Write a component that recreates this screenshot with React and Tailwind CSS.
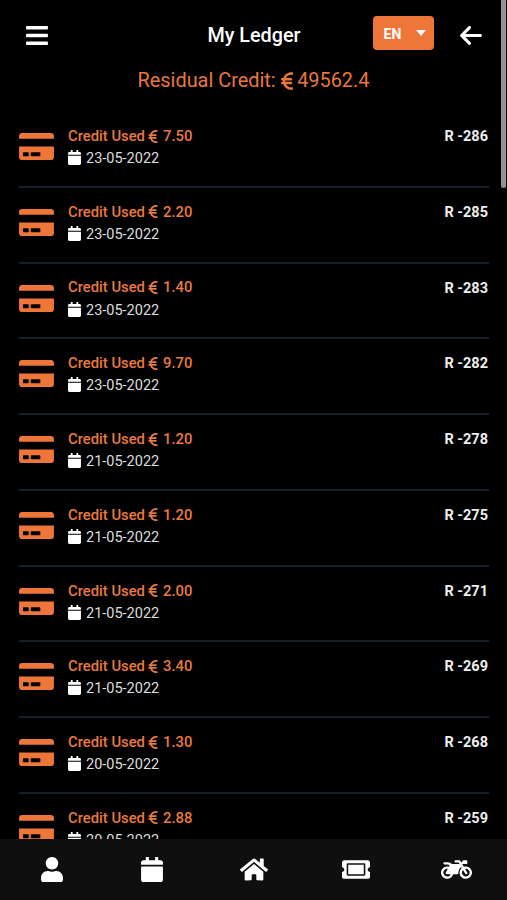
import React from "react";
import { FaBars, FaCalendar, FaCreditCard, FaHome, FaMotorcycle, FaTicketAlt, FaUser } from "react-icons/fa";
import { FaArrowLeft, FaEuroSign } from "react-icons/fa6";

const entries = [
  { id: 286, amount: "7.50", date: "23-05-2022" },
  { id: 285, amount: "2.20", date: "23-05-2022" },
  { id: 283, amount: "1.40", date: "23-05-2022" },
  { id: 282, amount: "9.70", date: "23-05-2022" },
  { id: 278, amount: "1.20", date: "21-05-2022" },
  { id: 275, amount: "1.20", date: "21-05-2022" },
  { id: 271, amount: "2.00", date: "21-05-2022" },
  { id: 269, amount: "3.40", date: "21-05-2022" },
  { id: 268, amount: "1.30", date: "20-05-2022" },
  { id: 259, amount: "2.88", date: "20-05-2022" },
];

const Header = () => (
  <header className="relative flex h-[66px] shrink-0 items-center justify-between pt-1 pr-[25.5px] pl-[26px]">
    <button aria-label="Menu">
      <FaBars className="h-[25px] w-[22px]" />
    </button>
    {/* Title stays centred whatever sits on either side */}
    <h1 className="absolute inset-x-0 top-[22px] pl-px text-center text-[19.8px] leading-7 font-medium">My Ledger</h1>
    <div className="relative flex items-center">
      <button className="mr-[26px] mb-[5px] flex h-[34px] w-[61px] items-center justify-between rounded-[4px] bg-[#ee7638] pr-2 pl-[11px] text-[14px] font-bold">
        <span className="pt-1">EN</span>
        <svg viewBox="0 0 10 6" className="h-[6px] w-[10px]" fill="currentColor">
          <path d="M0 0h10L5 6z" />
        </svg>
      </button>
      <button aria-label="Back">
        <FaArrowLeft className="h-[25px] w-[22px]" />
      </button>
    </div>
  </header>
);

const LedgerRow = ({ entry }) => (
  <li className="flex h-[75.78px] shrink-0 border-b-2 border-[#161e29] pt-[14px]">
    <FaCreditCard className="mt-[5px] h-[31px] w-[35px] shrink-0 text-[#ee7638]" />
    <div className="ml-[14px] flex-1">
      <p className="flex h-[22px] items-center pb-[2px] text-[14.8px] font-medium text-[#ea7a3e]">
        Credit Used
        <FaEuroSign className="mr-[5px] ml-[3px] h-[15px] w-[10px]" />
        {entry.amount}
      </p>
      <p className="flex h-[22px] items-center text-[14.5px] text-[#dedede]">
        <FaCalendar className="mr-[5px] mb-[3px] h-[15px] w-[13px] text-white" />
        {entry.date}
      </p>
    </div>
    <span className="h-[22px] pr-px text-[14.5px] leading-[22px] font-bold text-[#eeeeee]">R -{entry.id}</span>
  </li>
);

const BottomNav = () => (
  <nav className="flex h-[61px] shrink-0 items-center justify-around bg-[#0f0f0f] pl-px">
    <button aria-label="Profile" className="flex w-[101px] justify-center">
      <FaUser className="h-[25px] w-[22px]" />
    </button>
    <button aria-label="Calendar" className="flex w-[101px] justify-center pr-px">
      <FaCalendar className="h-[25px] w-[22px]" />
    </button>
    <button aria-label="Home" className="flex w-[101px] justify-center">
      <FaHome className="h-[25px] w-[28px]" />
    </button>
    <button aria-label="Tickets" className="flex w-[101px] justify-center pl-[2px]">
      <FaTicketAlt className="h-[25px] w-[28px]" />
    </button>
    <button aria-label="Delivery" className="flex w-[101px] justify-center">
      <FaMotorcycle className="h-[25px] w-[31px]" />
    </button>
  </nav>
);

const App = () => {
  return (
    <div className="relative flex h-screen w-full flex-col overflow-hidden bg-black font-['Roboto',sans-serif] text-white">
      <Header />
      <h2 className="flex h-7 shrink-0 items-center justify-center pt-[2px] text-[19.9px] text-[#e8783e]">
        Residual Credit:
        <FaEuroSign className="mr-1 ml-[5px] h-5 w-[12.5px]" />
        49562.4
      </h2>

      <main className="min-h-0 flex-1 overflow-hidden pt-[18px] pr-[18px] pl-[19px]">
        <ul className="flex flex-col">
          {entries.map((entry) => (
            <LedgerRow key={entry.id} entry={entry} />
          ))}
        </ul>
      </main>

      <BottomNav />

      {/* Scroll position thumb */}
      <div className="absolute top-0 right-px h-[188px] w-[5px] rounded-b-full bg-[#929292]"></div>
    </div>
  );
};

export default App;
